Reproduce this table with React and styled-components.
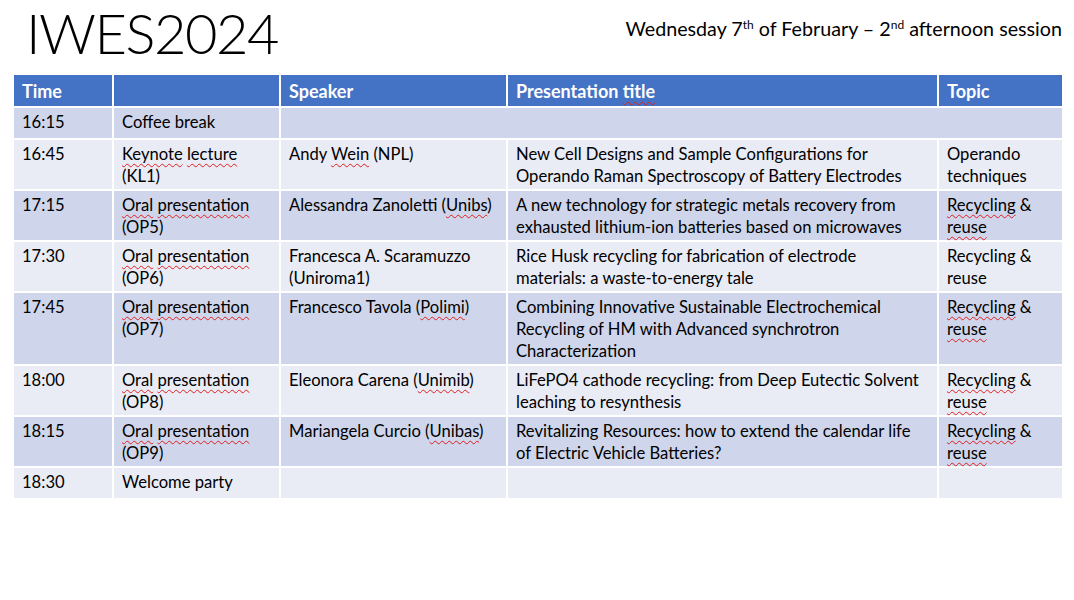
import React from 'react';
import styled, {createGlobalStyle} from 'styled-components';

const ROWS = [
  {time: '16:15', kind: 'Coffee break', span: true},
  {
    time: '16:45',
    kind: [['Keynote', true], ' ', ['lecture', true], ' (KL1)'],
    speaker: ['Andy ', ['Wein', true], ' (NPL)'],
    title: 'New Cell Designs and Sample Configurations for Operando Raman Spectroscopy of Battery Electrodes',
    topic: ['Operando techniques'],
  },
  {
    time: '17:15',
    kind: [['Oral', true], ' ', ['presentation', true], ' (OP5)'],
    speaker: ['Alessandra Zanoletti (', ['Unibs', true], ')'],
    title: 'A new technology for strategic metals recovery from exhausted lithium-ion batteries based on microwaves',
    topic: [['Recycling', true], ' & ', ['reuse', true]],
  },
  {
    time: '17:30',
    kind: [['Oral', true], ' ', ['presentation', true], ' (OP6)'],
    speaker: ['Francesca A. Scaramuzzo (Uniroma1)'],
    title: 'Rice Husk recycling for fabrication of electrode materials: a waste-to-energy tale',
    topic: ['Recycling & reuse'],
  },
  {
    time: '17:45',
    kind: [['Oral', true], ' ', ['presentation', true], ' (OP7)'],
    speaker: ['Francesco Tavola (', ['Polimi', true], ')'],
    title: 'Combining Innovative Sustainable Electrochemical Recycling of HM with Advanced synchrotron Characterization',
    topic: [['Recycling', true], ' & ', ['reuse', true]],
  },
  {
    time: '18:00',
    kind: [['Oral', true], ' ', ['presentation', true], ' (OP8)'],
    speaker: ['Eleonora Carena (', ['Unimib', true], ')'],
    title: 'LiFePO4 cathode recycling: from Deep Eutectic Solvent leaching to resynthesis',
    topic: [['Recycling', true], ' & ', ['reuse', true]],
  },
  {
    time: '18:15',
    kind: [['Oral', true], ' ', ['presentation', true], ' (OP9)'],
    speaker: ['Mariangela Curcio (', ['Unibas', true], ')'],
    title: 'Revitalizing Resources: how to extend the calendar life of Electric Vehicle Batteries?',
    topic: [['Recycling', true], ' & ', ['reuse', true]],
  },
  {time: '18:30', kind: 'Welcome party', blank: true},
];

// strings pass through, [word, true] gets the spell-check squiggle
const Words = ({parts}) => {
  if (typeof parts === 'string') return parts;
  return parts.map((p, i) =>
    Array.isArray(p) ? <Flag key={i}>{p[0]}</Flag> : <React.Fragment key={i}>{p}</React.Fragment>,
  );
};

export default function App() {
  return (
    <>
      <GlobalStyle/>
      <Slide>
        <Top>
          <Title>IWES2024</Title>
          <Session>
            Wednesday 7<sup>th</sup> of February – 2<sup>nd</sup> afternoon session
          </Session>
        </Top>

        <Table>
          <colgroup>
            <col style={{width: 100}}/>
            <col style={{width: 167}}/>
            <col style={{width: 227}}/>
            <col style={{width: 431}}/>
            <col style={{width: 125}}/>
          </colgroup>
          <thead>
            <tr>
              <Th>Time</Th>
              <Th/>
              <Th>Speaker</Th>
              <Th>Presentation <Flag>title</Flag></Th>
              <Th>Topic</Th>
            </tr>
          </thead>
          <tbody>
            {ROWS.map((r, i) => (
              <Row key={r.time} $odd={i % 2 === 0}>
                <Td>{r.time}</Td>
                <Td><Words parts={r.kind}/></Td>
                {r.span ? (
                  <Td colSpan={3}/>
                ) : r.blank ? (
                  <>
                    <Td/>
                    <Td/>
                    <Td/>
                  </>
                ) : (
                  <>
                    <Td><Words parts={r.speaker}/></Td>
                    <Td>{r.title}</Td>
                    <Td><Words parts={r.topic}/></Td>
                  </>
                )}
              </Row>
            ))}
          </tbody>
        </Table>
      </Slide>
    </>
  );
}

/******************************************************************
** Styled Components
*/
const GlobalStyle = createGlobalStyle`
  body {
    margin: 0;
    background: #fff;
    font-family: Lato, "Open Sans", sans-serif;
    color: #000;
  }
`;

const Slide = styled.div`
  width: 1074px;
  height: 600px;
  padding: 0 12px;
  box-sizing: border-box;
`;

const Top = styled.div`
  display: flex;
  justify-content: space-between;
  align-items: flex-start;
  height: 75px;
`;

const Title = styled.h1`
  margin: 0 0 0 14px;
  font-weight: 300;
  font-size: 56px;
  line-height: 66px;
  letter-spacing: -1.5px;
`;

const Session = styled.div`
  margin-top: 17px;
  font-size: 19.7px;
  line-height: 24px;

  sup {
    font-size: 12px;
    line-height: 0;
    vertical-align: 7px;
  }
`;

const Table = styled.table`
  width: 1050px;
  table-layout: fixed;
  border-collapse: collapse;
  font-size: 16.6px;
  line-height: 22px;
`;

const Th = styled.th`
  background: #4472c4;
  color: #fff;
  text-align: left;
  font-weight: 700;
  font-size: 18px;
  padding: 4px 8px 3px;
  height: 24px;
  border: 2px solid #fff;
  border-top: 0;
  vertical-align: middle;
`;

const Row = styled.tr`
  height: 32px;
  background: ${p => (p.$odd ? '#cfd5ea' : '#e9ebf5')};
`;

const Td = styled.td`
  padding: 3px 8px 2px;
  border: 2px solid #fff;
  vertical-align: top;
`;

const Flag = styled.span`
  text-decoration: underline wavy #e02020;
  text-decoration-thickness: 1px;
  text-underline-offset: 3px;
`;
